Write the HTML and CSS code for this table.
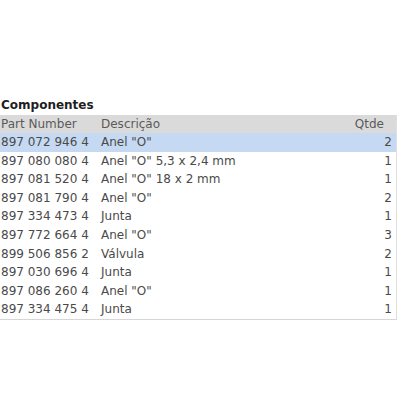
FILE: index.html
```html
<!DOCTYPE html>
<html lang="pt">
<head>
<meta charset="utf-8">
<link rel="stylesheet" href="styles.css">
</head>
<body>
<div class="page">
  <h2 class="title">Componentes</h2>
  <table class="grid">
    <thead>
      <tr><th class="pn">Part Number</th><th class="desc">Descrição</th><th class="qty">Qtde</th></tr>
    </thead>
    <tbody>
      <tr class="sel"><td class="pn">897 072 946 4</td><td class="desc">Anel "O"</td><td class="qty">2</td></tr>
      <tr><td class="pn">897 080 080 4</td><td class="desc">Anel "O" 5,3 x 2,4 mm</td><td class="qty">1</td></tr>
      <tr><td class="pn">897 081 520 4</td><td class="desc">Anel "O" 18 x 2 mm</td><td class="qty">1</td></tr>
      <tr><td class="pn">897 081 790 4</td><td class="desc">Anel "O"</td><td class="qty">2</td></tr>
      <tr><td class="pn">897 334 473 4</td><td class="desc">Junta</td><td class="qty">1</td></tr>
      <tr><td class="pn">897 772 664 4</td><td class="desc">Anel "O"</td><td class="qty">3</td></tr>
      <tr><td class="pn">899 506 856 2</td><td class="desc">Válvula</td><td class="qty">2</td></tr>
      <tr><td class="pn">897 030 696 4</td><td class="desc">Junta</td><td class="qty">1</td></tr>
      <tr><td class="pn">897 086 260 4</td><td class="desc">Anel "O"</td><td class="qty">1</td></tr>
      <tr><td class="pn">897 334 475 4</td><td class="desc">Junta</td><td class="qty">1</td></tr>
    </tbody>
  </table>
</div>
</body>
</html>
```
FILE: styles.css
```css
html, body {
  margin: 0;
  padding: 0;
  background: #ffffff;
}
.page {
  padding-top: 95px;
  font-family: "DejaVu Sans", Verdana, sans-serif;
  font-size: 12px;
}
.title {
  margin: 0;
  padding-left: 1px;
  font-size: 12px;
  font-weight: bold;
  color: #1e1e1e;
  line-height: 20px;
  height: 20px;
}
.grid {
  border-collapse: collapse;
  width: 397px;
  border-right: 1px solid #dedede;
  border-bottom: 1px solid #d6d6d6;
  table-layout: fixed;
}
.grid th {
  background: #dadada;
  color: #5a5a5a;
  font-weight: normal;
  height: 18px;
  line-height: 18px;
  padding: 0;
  text-align: left;
}
.grid td {
  color: #4a4a4a;
  height: 18.6px;
  line-height: 18.6px;
  padding: 0;
  white-space: nowrap;
}
.grid .pn {
  width: 100px;
  padding-left: 1px;
}
.grid .desc {
  width: auto;
}
.grid .qty {
  width: 60px;
  text-align: right;
}
.grid td.qty {
  padding-right: 4px;
}
.grid th.qty {
  padding-right: 12px;
}
.grid tr.sel td {
  background: #c6d9f2;
}
```
